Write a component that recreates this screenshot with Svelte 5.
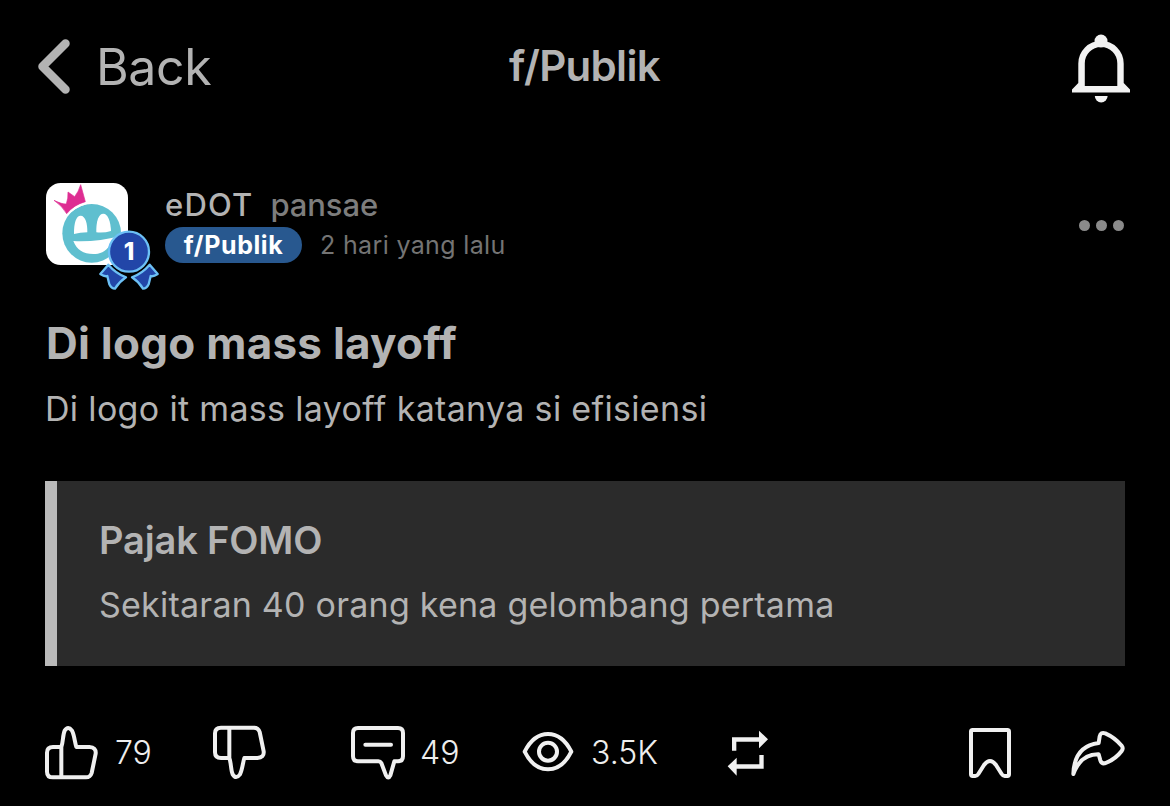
<script>
  const forum = 'f/Publik';

  const post = {
    company: 'eDOT',
    author: 'pansae',
    time: '2 hari yang lalu',
    rank: 1,
    title: 'Di logo mass layoff',
    body: 'Di logo it mass layoff katanya si efisiensi',
    likes: '79',
    comments: '49',
    views: '3.5K'
  };

  const quote = {
    author: 'Pajak FOMO',
    text: 'Sekitaran 40 orang kena gelombang pertama'
  };

  const thumb =
    'M52 66 C58 50 56 30 62 17 Q72 1 84 17 C91 30 92 50 97 66 H136 Q157 67 155 86 L143 144 Q139 157 126 157 H27 Q9 157 9 140 V83 Q9 66 27 66 Z M52 66 V157';
</script>

<div class="screen">
  <header class="topbar">
    <button type="button" class="back">
      <svg class="chevron" viewBox="0 0 36 62">
        <path d="M29.5 7.5 L6.5 30.5 L29.5 53.5" />
      </svg>
      <span>Back</span>
    </button>
    <h1 class="forum-name">{forum}</h1>
    <button type="button" class="bell" aria-label="Notifications">
      <svg viewBox="0 0 62 72">
        <circle cx="31" cy="9" r="6.5" />
        <path
          fill-rule="evenodd"
          d="M8.3 51 V31.5 A22.7 22.7 0 0 1 53.7 31.5 V51 L60 57.5 V60.5 H2 V57.5 Z M14.8 54 H47.3 V31.2 A16.25 16.25 0 0 0 14.8 31.2 Z"
        />
        <path d="M24.8 64 H37.6 A6.4 6.4 0 0 1 24.8 64 Z" />
      </svg>
    </button>
  </header>

  <article class="post">
    <div class="author-row">
      <svg class="avatar" viewBox="0 0 345 330">
        <rect width="246" height="246" rx="44" fill="#fff" />
        <circle cx="137" cy="151" r="88" fill="#5fbfcf" />
        <path d="M62 100 L52 84 L112 54 L126 62 Q88 72 62 100 Z" fill="#fff" />
        <path d="M24 52 Q48 64 61 63 Q67 46 66 27 L86 41 Q98 26 104 5 L118 56 Q84 65 62 92 Q48 68 24 52 Z" fill="#de2d92" stroke="#de2d92" stroke-width="2" />
        <path d="M84 153 C84 120 90 98 104 98 C118 98 125 122 124 148 Q102 148 84 153 Z" fill="#fff" />
        <path d="M151 148 C150 114 158 92 172 92 C186 92 194 116 195 144 Q176 150 151 148 Z" fill="#fff" />
        <path d="M82 174 Q150 178 226 158 L222 176 Q208 176 190 188 C180 206 160 213 142 213 C112 213 92 200 82 174 Z" fill="#fff" />
        <g fill="#2246a8" stroke="#6cc0f5" stroke-width="7" stroke-linejoin="round">
          <path d="M187 245 L163 273 Q176 282 184 279 Q187 292 190 304 Q196 317 207 317 Q220 296 240 283 Q208 270 187 245 Z" />
          <path d="M311 245 L335 273 Q322 282 314 279 Q311 292 308 304 Q302 317 291 317 Q278 296 258 283 Q290 270 311 245 Z" />
          <circle cx="249" cy="206" r="60" />
        </g>
        <text x="249" y="231" class="rank">{post.rank}</text>
      </svg>
      <div class="author">
        <div class="names">
          <span class="company">{post.company}</span>
          <span class="username">{post.author}</span>
        </div>
        <div class="meta">
          <span class="pill">{forum}</span>
          <span class="time">{post.time}</span>
        </div>
      </div>
      <button type="button" class="more" aria-label="More">
        <i></i><i></i><i></i>
      </button>
    </div>

    <h2 class="title">{post.title}</h2>
    <p class="body">{post.body}</p>

    <blockquote class="quote">
      <h3>{quote.author}</h3>
      <p>{quote.text}</p>
    </blockquote>

    <footer class="actions">
      <button type="button" class="action like">
        <svg viewBox="0 0 165 165"><path d={thumb} /></svg>
        <span>{post.likes}</span>
      </button>
      <button type="button" class="action dislike" aria-label="Dislike">
        <svg class="flipped" viewBox="0 0 165 165"><path d={thumb} /></svg>
      </button>
      <button type="button" class="action comment">
        <svg viewBox="0 0 168 165">
          <path d="M24 9 H144 Q159 9 159 24 V94 Q159 109 144 109 H133 L121 151 Q115 164 108 151 L94 114 Q91 109 85 109 H24 Q9 109 9 94 V24 Q9 9 24 9 Z M46 59 H123" />
        </svg>
        <span>{post.comments}</span>
      </button>
      <button type="button" class="action views">
        <svg viewBox="0 0 159 165">
          <path d="M8 80 C26 44 50 27 78 27 C106 27 130 44 148 80 C130 116 106 133 78 133 C50 133 26 116 8 80 Z" />
          <circle cx="78" cy="80" r="27" />
        </svg>
        <span>{post.views}</span>
      </button>
      <button type="button" class="action repost" aria-label="Repost">
        <svg class="solid" viewBox="0 0 126 165">
          <path d="M15 77 V37 H96 V17 L123 43 L96 70 V50 H28 V77 Z" />
          <path d="M110 90 V131 H29 V152 L2 124 L29 98 V118 H97 V90 Z" />
        </svg>
      </button>
      <button type="button" class="action save" aria-label="Save">
        <svg viewBox="0 0 132 165">
          <path d="M14 15 H118 Q123 15 123 20 V148 Q123 153 118 153 H110 Q105 153 101 147 L84 120 Q66 96 48 120 L31 147 Q27 153 22 153 H14 Q9 153 9 148 V20 Q9 15 14 15 Z" />
        </svg>
      </button>
      <button type="button" class="action share" aria-label="Share">
        <svg viewBox="0 0 165 165">
          <path d="M7 147 C9 92 34 60 83 54 L86 34 Q89 20 103 25 Q132 38 152 62 Q158 70 152 78 Q134 102 104 114 Q92 118 88 106 L83 88 Q29 87 7 147 Z" />
        </svg>
      </button>
    </footer>
  </article>
</div>

<style>
  :global(body) {
    background: #000;
  }

  .screen {
    box-sizing: border-box;
    width: 1170px;
    height: 806px;
    overflow: hidden;
    background: #000;
    color: #b3b3b3;
    font-family: Inter, 'Liberation Sans', sans-serif;
  }

  button {
    padding: 0;
    border: none;
    background: none;
    color: inherit;
    font: inherit;
  }

  h1,
  h2,
  h3,
  p,
  blockquote {
    margin: 0;
  }

  svg {
    display: block;
    flex: none;
  }

  .topbar {
    display: grid;
    grid-template-columns: 1fr auto 1fr;
    align-items: center;
    height: 136px;
    padding: 0 38px 0 36px;
  }

  .back {
    display: flex;
    align-items: center;
    gap: 24px;
    padding-bottom: 2px;
    font-size: 50px;
    line-height: 60px;
    letter-spacing: -0.4px;
  }

  .chevron {
    width: 36px;
    height: 62px;
    fill: none;
    stroke: #b3b3b3;
    stroke-width: 8.5;
    stroke-linecap: round;
    stroke-linejoin: round;
  }

  .forum-name {
    padding: 0 0 5px 1px;
    font-size: 42px;
    font-weight: 600;
    line-height: 50px;
    letter-spacing: -0.7px;
  }

  .bell {
    justify-self: end;
  }

  .bell svg {
    width: 62px;
    height: 72px;
    fill: #f2f2f2;
  }

  .post {
    padding: 47px 45px 0;
  }

  .author-row {
    display: flex;
    height: 110px;
    padding-left: 1px;
  }

  .avatar {
    width: 115px;
    height: 110px;
  }

  .rank {
    fill: #fff;
    font-size: 72px;
    font-weight: 800;
    text-anchor: middle;
  }

  .author {
    flex: 1;
    margin-left: 4px;
  }

  .names {
    display: flex;
    gap: 17px;
    height: 44px;
    font-size: 31px;
    font-weight: 500;
    line-height: 44px;
  }

  .company {
    letter-spacing: 1.2px;
  }

  .username {
    color: #7d7d7d;
    letter-spacing: -0.1px;
  }

  .meta {
    display: flex;
    align-items: center;
    gap: 18px;
    height: 36px;
  }

  .pill {
    box-sizing: border-box;
    width: 137px;
    height: 36px;
    border-radius: 18px;
    background: #28588f;
    color: #fff;
    font-size: 25px;
    font-weight: 700;
    line-height: 36px;
    letter-spacing: 0.6px;
    text-align: center;
  }

  .time {
    color: #747474;
    font-size: 25px;
    letter-spacing: 0.35px;
  }

  .more {
    display: flex;
    gap: 6px;
    align-self: flex-start;
    margin: 37px 1px 0 0;
  }

  .more i {
    width: 11px;
    height: 11px;
    border-radius: 50%;
    background: #8a8a8a;
  }

  .title {
    margin: 23px 0 0 1px;
    font-size: 44px;
    font-weight: 700;
    line-height: 54px;
    letter-spacing: 0.25px;
  }

  .body {
    margin-top: 18px;
    font-size: 34px;
    line-height: 42px;
    letter-spacing: 0.33px;
  }

  .quote {
    box-sizing: border-box;
    height: 185px;
    margin-top: 51px;
    padding: 36px 42px;
    border-left: 12px solid #bababa;
    background: #2b2b2b;
  }

  .quote h3 {
    font-size: 38px;
    font-weight: 600;
    line-height: 46px;
    letter-spacing: -0.15px;
  }

  .quote p {
    margin-top: 21px;
    font-size: 34px;
    line-height: 42px;
    letter-spacing: 0.24px;
  }

  .actions {
    display: flex;
    height: 55px;
    margin: 59px -1px 0;
    color: #eee;
  }

  .action {
    display: flex;
    align-items: center;
    gap: 16px;
    font-size: 32px;
    font-weight: 300;
    line-height: 40px;
  }

  .action svg {
    height: 55px;
    overflow: visible;
    fill: none;
    stroke: #f0f0f0;
    stroke-width: 12;
    stroke-linecap: round;
    stroke-linejoin: round;
  }

  .action .solid {
    fill: #f0f0f0;
    stroke: none;
  }

  .flipped {
    transform: scaleY(-1);
  }

  .like {
    width: 168px;
  }

  .dislike {
    width: 138px;
  }

  .comment {
    gap: 14px;
    width: 172px;
  }

  .views {
    width: 205px;
  }

  .save {
    margin-left: auto;
    margin-right: 59px;
  }
</style>
